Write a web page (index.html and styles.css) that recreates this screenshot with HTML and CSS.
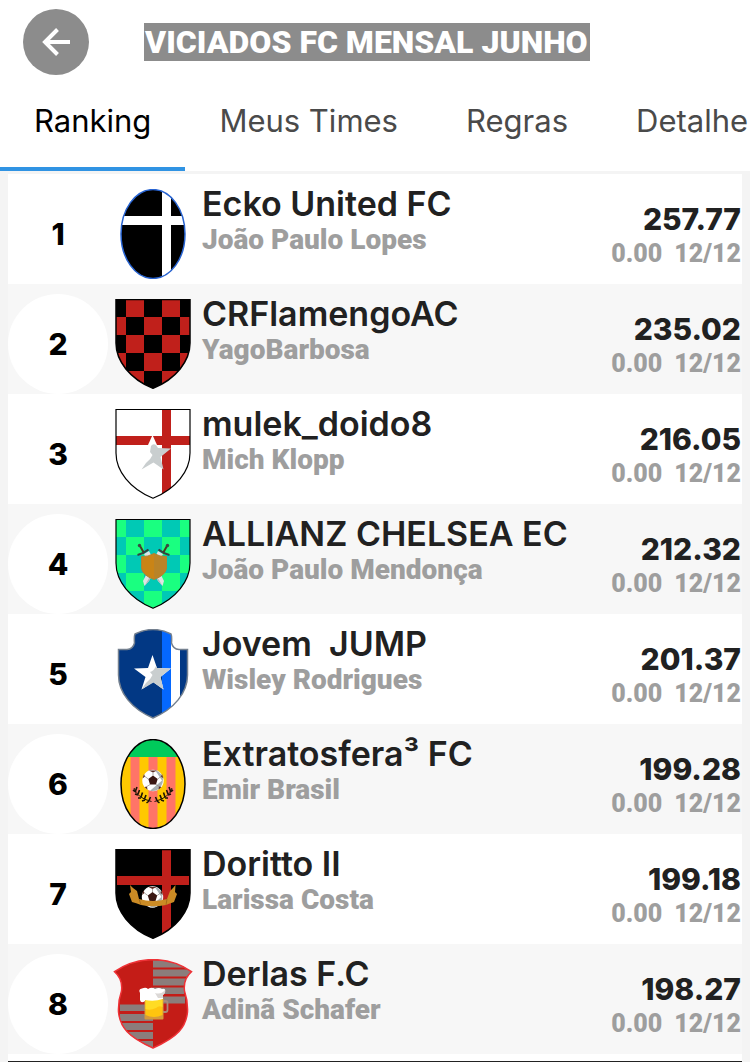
FILE: index.html
```html
<!DOCTYPE html>
<html lang="pt-BR">
<head>
<meta charset="utf-8">
<meta name="viewport" content="width=device-width, initial-scale=1">
<title>Viciados FC Mensal Junho</title>
<link rel="stylesheet" href="styles.css">
</head>
<body>
<svg class="defs" width="0" height="0" aria-hidden="true">
  <defs>
    <path id="shield" d="M8 .5H82V44C82 62 68 80 45 89.3C22 80 8 62 8 44Z"/>
    <clipPath id="c-shield"><use href="#shield"/></clipPath>
    <ellipse id="oval" cx="45" cy="45" rx="32" ry="44.4"/>
    <clipPath id="c-oval"><use href="#oval"/></clipPath>
    <path id="horned" d="M27 5Q45-4 63 5Q64 7 63.500 14Q65 20 71 20.500H79.500V46C79.500 64 66 80 45 89C24 80 10.500 64 10.500 46V20.500H19Q25 20 26.500 14Q26 7 27 5Z"/>
    <clipPath id="c-horned"><use href="#horned"/></clipPath>
    <path id="flared" d="M6.500 12.700Q23 1 45 .5Q67 1 83.500 12.700Q75 20 76.500 32Q80 42 79.500 53C78 68 70 78 45 89C20 78 12 68 10.500 53Q10 42 13.500 32Q15 20 6.500 12.700Z"/>
    <clipPath id="c-flared"><use href="#flared"/></clipPath>
    <path id="checks" d="M18 0H36V18H18ZM54 0H72V18H54ZM0 18H18V36H0ZM36 18H54V36H36ZM72 18H90V36H72ZM18 36H36V54H18ZM54 36H72V54H54ZM0 54H18V72H0ZM36 54H54V72H36ZM72 54H90V72H72ZM18 72H36V90H18ZM54 72H72V90H54Z"/>
    <g id="ball">
      <circle r="10.700" fill="#fff"/>
      <path d="M2-10.500A10.700 10.700 0 0 1-3 10.300L2 6L9 0Z" fill="#a9b0b2"/>
      <path d="M0-5L4.700-1.500L3 4H-3L-4.700-1.500Z" fill="#3a1712"/>
      <path d="M-4-10H4L0-8ZM-10.500-2L-8-4L-9-6.500ZM10.500-2L8-4L9-6.500ZM-8.500 6.500L-6 6L-5.500 9.200ZM8.500 6.500L6 6L5.500 9.200Z" fill="#5a2a20"/>
      <path d="M0-5V-8M4.700-1.500L8-4M3 4L6 6M-3 4L-6 6M-4.700-1.500L-8-4" stroke="#8b8580" stroke-width=".7"/>
    </g>
    <g id="sword">
      <path d="M36 35L41 32L56 62L54.500 67L50 62Z" fill="#dfe3e3"/>
      <path d="M36 35L50 62L54.500 67Z" fill="#aeb8b8"/>
      <path d="M32 27L36 34" stroke="#4a3a24" stroke-width="2"/>
      <circle cx="31.500" cy="26.500" r="1.700" fill="#3b4a45"/>
      <path d="M29.500 36Q35 35 40.500 30.500" fill="none" stroke="#34433f" stroke-width="2.200"/>
    </g>
    <g id="laurel" fill="none" stroke="#1c1405">
      <path d="M26 49Q29 59 43.500 62.500" stroke-width="1"/>
      <path d="M25 51L28 53M29 48L27.500 52M27 55L30 56M31.500 51L30 55M30 59L33 59M34.500 53.500L33 58M34 62L37 61M38 56L36.500 60M38.500 64L41 62M42.500 58L41 61.500" stroke-width="1.600"/>
    </g>
  </defs>
</svg>

<header class="header">
  <div class="topbar">
    <button class="back" type="button" aria-label="Voltar">
      <svg viewBox="0 0 66 66" aria-hidden="true"><path d="M47 33H22M34.500 20.500L22 33L34.500 45.500"/></svg>
    </button>
    <h1 class="title">VICIADOS FC MENSAL JUNHO</h1>
  </div>
  <nav class="tabs">
    <a class="tab tab-active" href="#ranking" aria-current="page">Ranking</a>
    <a class="tab" href="#times">Meus Times</a>
    <a class="tab" href="#regras">Regras</a>
    <a class="tab" href="#detalhes">Detalhe</a>
  </nav>
</header>

<main class="content" id="ranking">
  <ol class="list">
    <li class="row">
      <span class="rank">1</span>
      <svg class="crest" viewBox="0 0 90 90" aria-hidden="true">
        <g clip-path="url(#c-oval)"><path d="M0 0H90V90H0Z"/><path d="M54 0H63V90H54ZM0 27H90V36H0Z" fill="#fff"/></g>
        <use href="#oval" fill="none" stroke="#2864d2" stroke-width="1.500"/>
      </svg>
      <div class="team"><h2 class="name">Ecko United FC</h2><p class="sub">João Paulo Lopes</p></div>
      <div class="score"><p class="points">257.77</p><p class="detail"><span>0.00</span><span>12/12</span></p></div>
    </li>
    <li class="row">
      <span class="rank">2</span>
      <svg class="crest" viewBox="0 0 90 90" aria-hidden="true">
        <g clip-path="url(#c-shield)"><path d="M0 0H90V90H0Z"/><use href="#checks" fill="#c0201b"/></g>
        <use href="#shield" fill="none" stroke="#000" stroke-width="1.500"/>
      </svg>
      <div class="team"><h2 class="name">CRFlamengoAC</h2><p class="sub">YagoBarbosa</p></div>
      <div class="score"><p class="points">235.02</p><p class="detail"><span>0.00</span><span>12/12</span></p></div>
    </li>
    <li class="row">
      <span class="rank">3</span>
      <svg class="crest" viewBox="0 0 90 90" aria-hidden="true">
        <g clip-path="url(#c-shield)"><path d="M0 0H90V90H0Z" fill="#fff"/><path d="M54 0H63V90H54ZM0 27H90V36H0Z" fill="#c0201b"/></g>
        <path d="M44.500 26L49 36H40Z" fill="#fff"/>
        <path d="M43 37Q45 34 48 36L50 39L63 39.500L52.500 48L55.500 60.500L45.500 53.500L33.500 60.500L38 54Q43 50 44.500 46L42 43Z" fill="#c9cecf"/>
        <use href="#shield" fill="none" stroke="#000" stroke-width="1.200"/>
      </svg>
      <div class="team"><h2 class="name">mulek_doido8</h2><p class="sub">Mich Klopp</p></div>
      <div class="score"><p class="points">216.05</p><p class="detail"><span>0.00</span><span>12/12</span></p></div>
    </li>
    <li class="row">
      <span class="rank">4</span>
      <svg class="crest" viewBox="0 0 90 90" aria-hidden="true">
        <g clip-path="url(#c-shield)"><path d="M0 0H90V90H0Z" fill="#1aff80"/><use href="#checks" fill="#00c9b5"/></g>
        <use href="#sword"/>
        <use href="#sword" transform="matrix(-1 0 0 1 91 0)"/>
        <path d="M33.500 37.500Q40 38 46 34.500Q52 38 58.500 37.500V49Q58 56 46 60.500Q34 56 33.500 49Z" fill="#c98416" stroke="#a98338"/>
        <path d="M46 35Q52 38 58.500 37.500V49Q58 56 46 60.500Z" fill="#b98328"/>
        <use href="#shield" fill="none" stroke="#000" stroke-width="1.200"/>
      </svg>
      <div class="team"><h2 class="name">ALLIANZ CHELSEA EC</h2><p class="sub">João Paulo Mendonça</p></div>
      <div class="score"><p class="points">212.32</p><p class="detail"><span>0.00</span><span>12/12</span></p></div>
    </li>
    <li class="row">
      <span class="rank">5</span>
      <svg class="crest" viewBox="0 0 90 90" aria-hidden="true">
        <g clip-path="url(#c-horned)"><path d="M0 0H90V90H0Z" fill="#023884"/><path d="M54 0H63V90H54Z" fill="#0568ff"/><path d="M63 0H72V90H63Z" fill="#fff"/></g>
        <path d="M44.500 26L49 39L63 39.500L52.500 48L55.500 60.500L45 53L33.500 60.500L37.500 48L26 39.500L40 39Z" fill="#fff"/>
        <path d="M48 37L49 39L63 39.500L52.500 48L55.500 60.500L45.500 53.500L33.500 60.500L38 54Q43 50 44.500 46L42 43Q46 42 48 37Z" fill="#c9cecf"/>
        <use href="#horned" fill="none" stroke="#74808f" stroke-width="1.500"/>
      </svg>
      <div class="team"><h2 class="name">Jovem&nbsp; JUMP</h2><p class="sub">Wisley Rodrigues</p></div>
      <div class="score"><p class="points">201.37</p><p class="detail"><span>0.00</span><span>12/12</span></p></div>
    </li>
    <li class="row">
      <span class="rank">6</span>
      <svg class="crest" viewBox="0 0 90 90" aria-hidden="true">
        <g clip-path="url(#c-oval)"><path d="M0 0H90V90H0Z" fill="#ffc800"/><path d="M22.500 18H31.500V90H22.500ZM40.500 18H49.500V90H40.500ZM58.500 18H67.500V90H58.500Z" fill="#ff7468"/><path d="M0 0H90V18H0Z" fill="#00cb5b"/></g>
        <use href="#ball" transform="translate(45 41.500)"/>
        <use href="#laurel"/>
        <use href="#laurel" transform="matrix(-1 0 0 1 90 0)"/>
        <use href="#oval" fill="none" stroke="#000" stroke-width="1.500"/>
      </svg>
      <div class="team"><h2 class="name">Extratosfera³ FC</h2><p class="sub">Emir Brasil</p></div>
      <div class="score"><p class="points">199.28</p><p class="detail"><span>0.00</span><span>12/12</span></p></div>
    </li>
    <li class="row">
      <span class="rank">7</span>
      <svg class="crest" viewBox="0 0 90 90" aria-hidden="true">
        <g clip-path="url(#c-shield)"><path d="M0 0H90V90H0Z"/><path d="M54 1H63V82L54 87ZM9 27H81V36H9Z" fill="#c0201b"/></g>
        <use href="#shield" fill="none" stroke="#000" stroke-width="1.500"/>
        <use href="#ball" transform="translate(44.500 48)"/>
        <path d="M22 36L25 39L29 42L31 50Q45 54 59 50L62 42L65 39L67.500 36L67 43L69 45L66 53Q60 55 58 56Q45 58.500 33 56Q28 54 24 53L21 45L23 43Z" fill="#cb8b25"/>
        <path d="M31 50L33 56M59 50L58 56" stroke="#9a6516" stroke-width=".8"/>
      </svg>
      <div class="team"><h2 class="name">Doritto II</h2><p class="sub">Larissa Costa</p></div>
      <div class="score"><p class="points">199.18</p><p class="detail"><span>0.00</span><span>12/12</span></p></div>
    </li>
    <li class="row">
      <span class="rank">8</span>
      <svg class="crest" viewBox="0 0 90 90" aria-hidden="true">
        <g clip-path="url(#c-flared)">
          <path d="M0 0H90V90H0Z" fill="#c41c17"/>
          <path d="M45 1.500H90V8.500H45ZM45 10.500H90V17.500H45ZM45 19.500H90V26.500H45ZM45 28.500H76V35H45ZM45 37.500H77V44.500H45ZM12 45.500H45V52H12ZM12 55H45V62H12ZM12 64H45V71H12ZM12 73H45V80H12ZM12 82H45V89H12Z" fill="#8b7d7b"/>
        </g>
        <use href="#flared" fill="none" stroke="#ef3237" stroke-width="1.500"/>
        <rect x="54" y="42" width="5.500" height="11" rx="2" fill="none" stroke="#a98a7c" stroke-width="1.800"/>
        <rect x="36.500" y="39" width="19" height="21.500" rx="1" fill="#d69b3a"/>
        <path d="M37.500 40H54.500V56Q46 60 37.500 56Z" fill="#ffc40f"/>
        <path d="M37.500 41H54.500V48Q51 46 48 49Q42 52 37.500 50Z" fill="#ffdc24"/>
        <path d="M37 41V42Q33 45 32 41V34Q30 30 34 29.500Q38 28 40 30Q44 27.500 47 30Q51 28 54 30Q58 29 57 33Q56 35 55 36V40Q46 43 37 41Z" fill="#fff"/>
        <path d="M47 34Q53 36 57 31Q58 34 55 36V39H50Z" fill="#dbd8d6"/>
      </svg>
      <div class="team"><h2 class="name">Derlas F.C</h2><p class="sub">Adinã Schafer</p></div>
      <div class="score"><p class="points">198.27</p><p class="detail"><span>0.00</span><span>12/12</span></p></div>
    </li>
  </ol>
</main>
<footer class="bottom"></footer>
</body>
</html>
```
FILE: styles.css
```css
* { box-sizing: border-box; }

body {
  margin: 0;
  background: #f4f4f4;
  color: #212121;
  font-family: Inter, Roboto, sans-serif;
}

h1, h2, p, ol { margin: 0; padding: 0; }

.defs { display: block; }

.header {
  background: #fff;
  border-bottom: 3px solid #f4f4f4;
}

.topbar {
  display: flex;
  align-items: center;
  gap: 55px;
  padding: 9px 23px 0;
}

.back {
  flex: none;
  width: 66px;
  height: 66px;
  padding: 0;
  border: 0;
  border-radius: 50%;
  background: #8c8c8c;
}

.back svg {
  display: block;
  fill: none;
  stroke: #fff;
  stroke-width: 4;
}

.title {
  padding: 0 2px 0 1px;
  background: #8c8c8c;
  color: #fff;
  font: 900 32px/38px Roboto, sans-serif;
  white-space: nowrap;
}

.tabs {
  display: flex;
  overflow: hidden;
}

.tab {
  flex: none;
  height: 96px;
  padding: 0 34px;
  border-bottom: 4px solid transparent;
  color: #4a4a4a;
  font-size: 31px;
  line-height: 92px;
  text-decoration: none;
  white-space: nowrap;
}

.tab:last-child { padding-right: 0; }

.tab-active {
  border-color: #3093e3;
  color: #000;
}

.content { padding: 0 8px; }

.list { list-style: none; }

.row {
  display: flex;
  height: 110px;
  background: #fff;
}

.row:nth-child(even) { background: #f7f7f7; }

.rank {
  flex: none;
  width: 100px;
  height: 100px;
  margin-top: 10px;
  border-radius: 50%;
  background: #fff;
  color: #000;
  font: 800 30px/100px Inter, sans-serif;
  text-align: center;
}

.crest {
  flex: none;
  width: 90px;
  height: 90px;
  margin-top: 15px;
}

.team {
  flex: 1;
  min-width: 0;
  padding: 10px 0 0 4px;
}

.name {
  font-size: 34px;
  font-weight: 600;
  line-height: 40px;
  white-space: nowrap;
}

.sub {
  color: #9e9e9e;
  font: 900 28px/32px Roboto, sans-serif;
  white-space: nowrap;
}

.score {
  padding: 25px 1px 0 0;
  text-align: right;
}

.points {
  font-size: 30px;
  font-weight: 800;
  line-height: 40px;
}

.detail {
  display: flex;
  justify-content: flex-end;
  gap: 12px;
  color: #9e9e9e;
  font: 900 25px/30px Roboto, sans-serif;
}

.bottom {
  height: 8px;
  border: solid #f4f4f4;
  border-width: 0 8px;
  background: #fff;
  box-shadow: inset 0 -1px #222;
}
```
